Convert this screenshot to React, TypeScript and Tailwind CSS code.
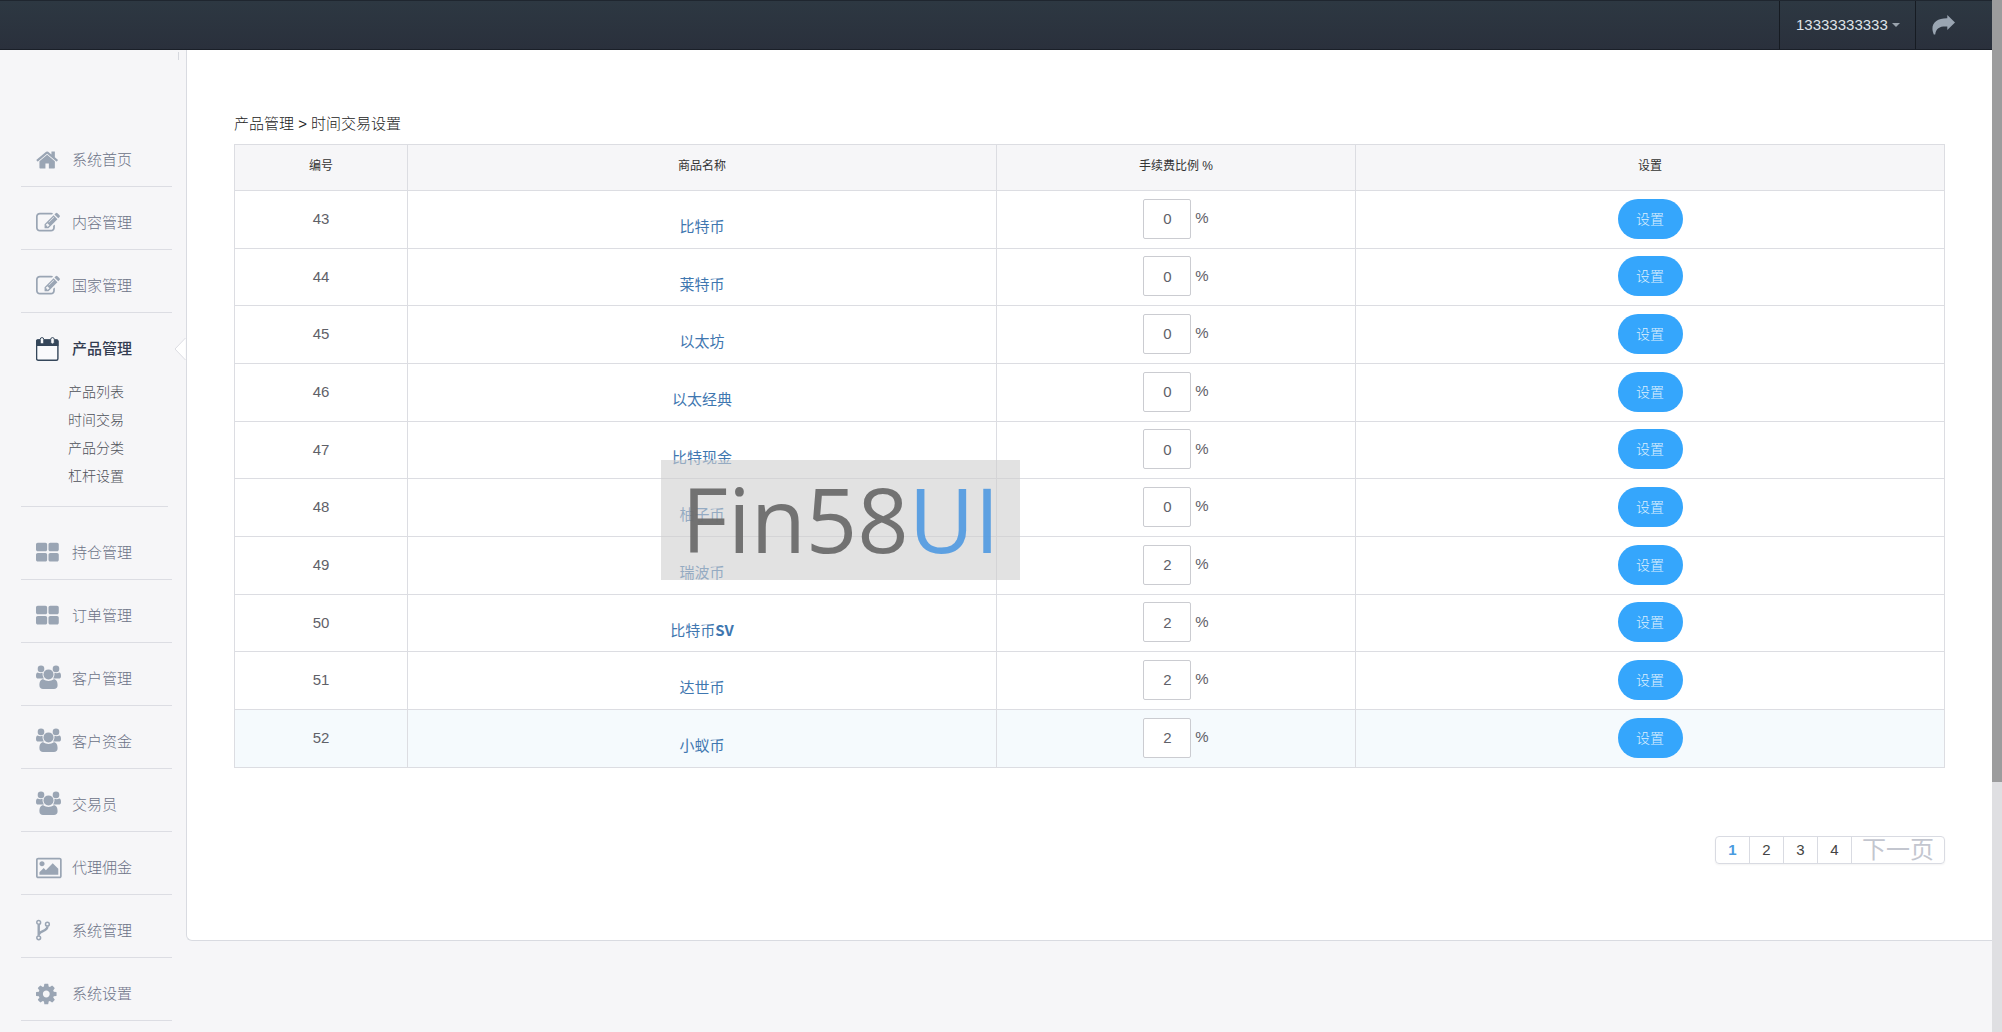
import React from 'react';

interface Product {
  id: number;
  name: string;
  suffix?: string;
  fee: number;
}

interface MenuItem {
  label: string;
  icon: React.ReactNode;
}

const products: Product[] = [
  { id: 43, name: '比特币', fee: 0 },
  { id: 44, name: '莱特币', fee: 0 },
  { id: 45, name: '以太坊', fee: 0 },
  { id: 46, name: '以太经典', fee: 0 },
  { id: 47, name: '比特现金', fee: 0 },
  { id: 48, name: '柚子币', fee: 0 },
  { id: 49, name: '瑞波币', fee: 2 },
  { id: 50, name: '比特币', suffix: 'SV', fee: 2 },
  { id: 51, name: '达世币', fee: 2 },
  { id: 52, name: '小蚁币', fee: 2 },
];

const homePath =
  'M1408 544v-480q0 -26 -19 -45t-45 -19h-384v384h-256v-384h-384q-26 0 -45 19t-19 45v480q0 1 0.5 3t0.5 3l575 474l575 -474q1 -2 1 -6zM1631 613l-62 -74q-8 -9 -21 -11h-3q-13 0 -21 7l-692 577l-692 -577q-12 -8 -24 -7q-13 2 -21 11l-62 74q-8 10 -7 23.5t11 21.5l719 599q32 26 76 26t76 -26l244 -204v195q0 14 9 23t23 9h192q14 0 23 -9t9 -23v-408l219 -182q10 -8 11 -21.5t-7 -23.5z';
const editPath =
  'M888 352l116 116l-152 152l-116 -116v-56h96v-96h56zM1328 1072q-16 16 -33 -1l-350 -350q-17 -17 -1 -33t33 1l350 350q17 17 1 33zM1408 478v-190q0 -119 -84.5 -203.5t-203.5 -84.5h-832q-119 0 -203.5 84.5t-84.5 203.5v832q0 119 84.5 203.5t203.5 84.5h832q63 0 117 -25q15 -7 18 -23q3 -17 -9 -29l-49 -49q-14 -14 -32 -8q-23 6 -45 6h-832q-66 0 -113 -47t-47 -113v-832q0 -66 47 -113t113 -47h832q66 0 113 47t47 113v126q0 13 9 22l64 64q15 15 35 7t20 -29zM1312 1216l288 -288l-672 -672h-288v288zM1756 1084l-92 -92l-288 288l92 92q28 28 68 28t68 -28l152 -152q28 -28 28 -68t-28 -68z';
const gridPath =
  'M832 512v-384q0 -52 -38 -90t-90 -38h-576q-52 0 -90 38t-38 90v384q0 52 38 90t90 38h576q52 0 90 -38t38 -90zM832 1280v-384q0 -52 -38 -90t-90 -38h-576q-52 0 -90 38t-38 90v384q0 52 38 90t90 38h576q52 0 90 -38t38 -90zM1700 512v-384q0 -52 -38 -90t-90 -38h-512q-52 0 -90 38t-38 90v384q0 52 38 90t90 38h512q52 0 90 -38t38 -90zM1700 1280v-384q0 -52 -38 -90t-90 -38h-512q-52 0 -90 38t-38 90v384q0 52 38 90t90 38h512q52 0 90 -38t38 -90z';
const picturePath =
  'M640 960q0 -80 -56 -136t-136 -56t-136 56t-56 136t56 136t136 56t136 -56t56 -136zM1664 576v-448h-1408v192l320 320l160 -160l512 512zM1760 1280h-1600q-13 0 -22.5 -9.5t-9.5 -22.5v-1216q0 -13 9.5 -22.5t22.5 -9.5h1600q13 0 22.5 9.5t9.5 22.5v1216q0 13 -9.5 22.5t-22.5 9.5zM1920 1248v-1216q0 -66 -47 -113t-113 -47h-1600q-66 0 -113 47t-47 113v1216q0 66 47 113t113 47h1600q66 0 113 -47t47 -113z';
const cogPath =
  'M1024 640q0 106 -75 181t-181 75t-181 -75t-75 -181t75 -181t181 -75t181 75t75 181zM1536 749v-222q0 -12 -8 -23t-20 -13l-185 -28q-19 -54 -39 -91q35 -50 107 -138q10 -12 10 -25t-9 -23q-27 -37 -99 -108t-94 -71q-12 0 -26 9l-138 108q-44 -23 -91 -38q-16 -136 -29 -186q-7 -28 -36 -28h-222q-14 0 -24.5 8.5t-11.5 21.5l-28 184q-49 16 -90 37l-141 -107q-10 -9 -25 -9q-14 0 -25 11q-126 114 -165 168q-7 10 -7 23q0 12 8 23q15 21 51 66.5t54 70.5q-27 50 -41 99l-183 27q-13 2 -21 12.5t-8 23.5v222q0 12 8 23t19 13l186 28q14 46 39 92q-40 57 -107 138q-10 12 -10 24q0 10 9 23q26 36 98.5 107.5t94.5 71.5q13 0 26 -10l138 -107q44 23 91 38q16 136 29 186q7 28 36 28h222q14 0 24.5 -8.5t11.5 -21.5l28 -184q49 -16 90 -37l142 107q9 9 24 9q13 0 25 -10q129 -119 165 -170q7 -8 7 -22q0 -12 -8 -23q-15 -21 -51 -66.5t-54 -70.5q26 -50 41 -98l183 -28q13 -2 21 -12.5t8 -23.5z';

// Font glyph paths have the y axis pointing up, so they are flipped here
const GlyphIcon = ({ d }: { d: string }) => (
  <svg viewBox="0 0 1941 1792" className="h-6 w-[26px]" fill="currentColor" aria-hidden="true">
    <path d={d} transform="translate(0 1536) scale(1 -1)" />
  </svg>
);

const GroupIcon = () => (
  <svg viewBox="0 0 26 24" className="h-6 w-[26px] overflow-visible" fill="currentColor" aria-hidden="true">
    <circle cx="5" cy="1.9" r="3.3" />
    <circle cx="20" cy="1.9" r="3.3" />
    <path d="M0 8.9C0 7 0.6 5.6 1.6 5.6C3.2 6.4 5 6.5 6.6 5.8C6.3 8 6.8 9.9 8 11.6H2.4C0.8 11.6 0 10.7 0 8.9Z" />
    <path d="M25 8.9C25 7 24.4 5.6 23.4 5.6C21.8 6.4 20 6.5 18.4 5.8C18.7 8 18.2 9.9 17 11.6H22.6C24.2 11.6 25 10.7 25 8.9Z" />
    <circle cx="12.5" cy="7.4" r="5" />
    <path d="M3.4 18.2C3.4 14.8 4.6 12.3 7.3 12.3C9 13.5 10.6 14 12.5 14C14.4 14 16 13.5 17.7 12.3C20.4 12.3 21.6 14.8 21.6 18.2C21.6 20.8 20 22 18 22H7C5 22 3.4 20.8 3.4 18.2Z" />
  </svg>
);

const CalendarIcon = () => (
  <svg viewBox="0 0 26 24" className="h-6 w-[26px]" aria-hidden="true">
    <rect x="0.6" y="3" width="21.3" height="20.2" rx="1.5" fill="#f9fafc" stroke="currentColor" strokeWidth="1.4" />
    <path d="M0 9V4.2C0 3 .8 2.4 2 2.4H20.5C21.7 2.4 22.5 3 22.5 4.2V9Z" fill="currentColor" />
    <rect x="4.2" y="0.6" width="3.6" height="6.4" rx="1.8" fill="#f9fafc" stroke="currentColor" />
    <rect x="14.7" y="0.6" width="3.6" height="6.4" rx="1.8" fill="#f9fafc" stroke="currentColor" />
  </svg>
);

const ForkIcon = () => (
  <svg viewBox="0 0 26 24" className="h-6 w-[26px]" fill="none" stroke="currentColor" aria-hidden="true">
    <circle cx="2.7" cy="3.4" r="1.9" strokeWidth="1.5" />
    <circle cx="2.7" cy="18.8" r="1.9" strokeWidth="1.5" />
    <circle cx="11.4" cy="5.2" r="1.9" strokeWidth="1.5" />
    <path d="M2.7 5.4V16.8M11.4 7.4C11.4 12.6 3.4 11.4 2.9 15.6" strokeWidth="2.4" />
  </svg>
);

const topItems: MenuItem[] = [
  { label: '系统首页', icon: <GlyphIcon d={homePath} /> },
  { label: '内容管理', icon: <GlyphIcon d={editPath} /> },
  { label: '国家管理', icon: <GlyphIcon d={editPath} /> },
];

const subItems = ['产品列表', '时间交易', '产品分类', '杠杆设置'];

const bottomItems: MenuItem[] = [
  { label: '持仓管理', icon: <GlyphIcon d={gridPath} /> },
  { label: '订单管理', icon: <GlyphIcon d={gridPath} /> },
  { label: '客户管理', icon: <GroupIcon /> },
  { label: '客户资金', icon: <GroupIcon /> },
  { label: '交易员', icon: <GroupIcon /> },
  { label: '代理佣金', icon: <GlyphIcon d={picturePath} /> },
  { label: '系统管理', icon: <ForkIcon /> },
  { label: '系统设置', icon: <GlyphIcon d={cogPath} /> },
];

const MenuRow = ({ item }: { item: MenuItem }) => (
  <li className="border-b border-[#dcdde3] pt-6 pb-[14px]">
    <a href="#" className="flex h-6 items-center gap-[10px] pl-[15px] text-[15px] text-[#6c7287]">
      <span className="text-[#9aa5b4]">{item.icon}</span>
      {item.label}
    </a>
  </li>
);

function Sidebar() {
  return (
    <nav className="relative w-[186px] shrink-0 pt-[74px] pr-[14px] pl-[21px] font-light">
      <span className="absolute top-0.5 right-[7px] h-2 w-px bg-[#d6d8de]" />
      <ul>
        {topItems.map((item) => (
          <MenuRow key={item.label} item={item} />
        ))}
      </ul>
      <div className="relative mr-1 border-b border-[#dcdde3] pt-6 pb-4">
        <a href="#" className="flex h-6 items-center gap-[10px] pl-[15px] text-[15px] font-medium text-[#333c50]">
          <span className="text-[#34465a]">
            <CalendarIcon />
          </span>
          产品管理
        </a>
        {/* Arrow that ties the open section to the content panel */}
        <svg viewBox="0 0 12 24" className="absolute top-6 -right-[18px] h-6 w-3" fill="#fff" stroke="#dcdde3" aria-hidden="true">
          <path d="M11.5 1L1 12L11.5 23" />
        </svg>
        <ul className="mt-[17px]">
          {subItems.map((label) => (
            <li key={label} className="h-7 pl-[47px] text-sm leading-7 text-[#4d5058]">
              <a href="#">{label}</a>
            </li>
          ))}
        </ul>
      </div>
      <ul className="mt-[10px]">
        {bottomItems.map((item) => (
          <MenuRow key={item.label} item={item} />
        ))}
      </ul>
    </nav>
  );
}

function Header() {
  return (
    <header className="flex h-[50px] justify-end border-t border-b border-t-[#1f262f] border-b-[#1a1f28] bg-linear-to-b from-[#2d3842] to-[#2a303c]">
      <button className="flex w-[136px] items-center gap-1 border-l border-[#161b22] pl-4 text-[15px] text-[#dfe3e8]">
        13333333333
        <svg viewBox="0 0 8 4" className="h-1 w-2" fill="#9aa3ad" aria-hidden="true">
          <path d="M0 0H8L4 4Z" />
        </svg>
      </button>
      <a href="#" aria-label="退出" className="flex w-[77px] items-center border-l border-[#161b22] pl-4">
        <svg viewBox="0 0 24 20" className="h-5 w-6" fill="#9aa5b2" aria-hidden="true">
          <path d="M15.3 0L23 7.5L15.3 15V11.5C8.5 11.1 4 12.5 3.2 19.5L1.8 19.5C-2.5 9.5 3.8 3 15.3 3.2Z" />
        </svg>
      </a>
    </header>
  );
}

function ProductTable() {
  return (
    <table className="w-full table-fixed border-collapse text-center text-[15px] text-[#5f6168]">
      <colgroup>
        <col className="w-[173px]" />
        <col />
        <col className="w-[359px]" />
        <col />
      </colgroup>
      <thead>
        <tr className="h-[46px] bg-[#f6f6f8] text-xs text-[#333]">
          {['编号', '商品名称', '手续费比例 %', '设置'].map((title) => (
            <th key={title} className="border border-[#dcdde2] pb-1 font-normal">
              {title}
            </th>
          ))}
        </tr>
      </thead>
      <tbody>
        {products.map((product) => (
          <tr key={product.id} className="h-[58px] last:bg-[#f5fafd] [&:nth-child(3n+2)]:h-[57px]">
            <td className="border border-[#dcdde2]">{product.id}</td>
            <td className="border border-[#dcdde2] pt-[14px] font-['Noto_Sans_CJK_SC',sans-serif] text-[#3f77b0]">
              <a href="#">
                {product.name}
                {product.suffix && <b>{product.suffix}</b>}
              </a>
            </td>
            <td className="border border-[#dcdde2] pb-0.5">
              <div className="flex items-center justify-center gap-1">
                <input
                  type="text"
                  aria-label={`${product.name} 手续费比例`}
                  defaultValue={product.fee}
                  className="h-10 w-12 rounded-xs border border-[#cbccd1] bg-white text-center"
                />
                <span>%</span>
              </div>
            </td>
            <td className="border border-[#dcdde2] pb-0.5">
              <button className="mx-auto block h-10 w-[65px] rounded-full bg-[#35a6fc] text-sm font-light text-[#dceffe]">
                设置
              </button>
            </td>
          </tr>
        ))}
      </tbody>
    </table>
  );
}

function Pagination() {
  return (
    <div className="flex justify-end">
      <div className="flex h-7 divide-x divide-[#d9dbe2] rounded-sm border border-[#d9dbe2] text-[15px] text-[#444] shadow-xs">
        <button className="w-[34px] font-bold text-[#4a9be0]">1</button>
        <button className="w-[34px]">2</button>
        <button className="w-[34px]">3</button>
        <button className="w-[34px]">4</button>
        <button className="w-[92px] text-2xl leading-6 text-[#c3c6cf]">下一页</button>
      </div>
    </div>
  );
}

function App() {
  return (
    <div className="flex min-h-screen bg-[#f6f6f8] font-['Liberation_Sans','Noto_Sans_CJK_SC',sans-serif]">
      <div className="relative min-w-0 flex-1">
        <Header />
        <div className="flex items-start">
          <Sidebar />
          <main className="min-w-0 flex-1 rounded-bl-md border-b border-l border-[#d9dbe1] bg-white px-[47px] pt-[62px] pb-[76px]">
            <p className="mb-2 text-[15px] leading-6 font-light text-[#222]">产品管理 &gt; 时间交易设置</p>
            <ProductTable />
            <div className="mt-[68px]">
              <Pagination />
            </div>
          </main>
        </div>

        {/* Watermark */}
        <div className="pointer-events-none absolute top-[460px] left-[661px] flex h-[120px] w-[359px] items-center justify-center bg-[#cfcfcf]/60 pb-1 font-['Open_Sans','Noto_Sans',sans-serif] text-[90px] leading-none font-medium text-[#6c6c6c]/95">
          Fin58<span className="text-[#559ce0]/95">UI</span>
        </div>
      </div>

      {/* Scrollbar */}
      <div className="w-[10px] shrink-0 bg-[#dfdfe2]">
        <div className="h-[782px] bg-[#9c9c9d]" />
      </div>
    </div>
  );
}

export default App;
